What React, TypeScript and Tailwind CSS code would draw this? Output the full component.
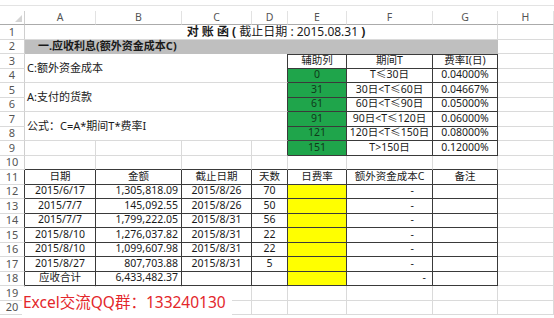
import React from 'react';
import { twMerge } from 'tailwind-merge';

const FONT = { fontFamily: '"Noto Sans", "Noto Sans CJK SC", sans-serif' };

type CellProps = { children?: React.ReactNode; className?: string };

// plain sheet cell with light gridlines
const C = ({ children, className }: CellProps) => (
	<div
		className={twMerge(
			'flex items-center whitespace-nowrap leading-none border-r border-b border-[#dadada] text-[10.5px] text-[#1a1a1a]',
			className
		)}
	>
		{children}
	</div>
);

// cell inside a bordered table
const T = ({ children, className }: CellProps) => (
	<C className={twMerge('justify-center border-[#3a3a3a]', className)}>{children}</C>
);

const RH = ({ n, dark }: { n: number; dark?: boolean }) => (
	<C
		className={twMerge(
			'justify-center text-[11px] text-[#555] border-r-[#cfcfcf]',
			dark ? 'border-r-[#3a3a3a]' : ''
		)}
	>
		{n}
	</C>
);

const rates = [
	['0', 'T≤30日', '0.04000%'],
	['31', '30日<T≤60日', '0.04667%'],
	['61', '60日<T≤90日', '0.05000%'],
	['91', '90日<T≤120日', '0.06000%'],
	['121', '120日<T≤150日', '0.08000%'],
	['151', 'T>150日', '0.12000%'],
];

const items = [
	['2015/6/17', '1,305,818.09', '2015/8/26', '70'],
	['2015/7/7', '145,092.55', '2015/8/26', '50'],
	['2015/7/7', '1,799,222.05', '2015/8/31', '56'],
	['2015/8/10', '1,276,037.82', '2015/8/31', '22'],
	['2015/8/10', '1,099,607.98', '2015/8/31', '22'],
	['2015/8/27', '807,703.88', '2015/8/31', '5'],
];

const notes = ['C:额外资金成本', 'A:支付的货款', '公式：C=A*期间T*费率I'];

export default function App() {
	return (
		<div className="relative w-[554px] h-[318px] overflow-hidden bg-white" style={FONT}>
			<div className="h-[11px] pt-[5px]">
				<div className="border-t border-[#e3e3e3]" />
			</div>

			<div className="grid grid-cols-[25px_71px_86px_70px_36px_59px_86px_65px_1fr] grid-rows-[14px] auto-rows-[14.5px]">
				{/* column letters */}
				<C className="items-end justify-end border-b-[#ababab] border-r-[#cfcfcf] pr-[2px] pb-[2px]">
					<div className="w-0 h-0 border-l-[7px] border-l-transparent border-b-[7px] border-b-[#d4d4d4]" />
				</C>
				{['A', 'B', 'C', 'D', 'E', 'F', 'G', 'H'].map((l) => (
					<C key={l} className="justify-center text-[10.5px] text-[#555] border-b-[#ababab] border-r-[#e2e2e2]">
						{l}
					</C>
				))}

				{/* row 1 */}
				<RH n={1} />
				<C className="col-span-7 justify-center pl-[30px] text-[12px]">
					<span className="font-bold">对&nbsp;账&nbsp;函&nbsp;(&nbsp;</span>
					<span>截止日期&nbsp;:&nbsp;2015.08.31</span>
					<span className="font-bold">&nbsp;)</span>
				</C>
				<C />

				{/* row 2 */}
				<RH n={2} />
				<C className="col-span-7 bg-[#bfbfbf] border-[#bfbfbf] pl-[13px] font-bold text-[11px]">
					一.应收利息(额外资金成本C)
				</C>
				<C />

				{/* rows 3-8 */}
				{[0, 1, 2, 3, 4, 5].map((i) => (
					<React.Fragment key={i}>
						<RH n={3 + i} />
						{i % 2 === 0 && (
							<C className="col-span-4 row-span-2 pl-[2px] text-[11px] border-r-[#3a3a3a]">
								{notes[i / 2]}
							</C>
						)}
						{i === 0 ? (
							<>
								<T className="border-t">辅助列</T>
								<T className="border-t">期间T</T>
								<T className="border-t">费率I(日)</T>
							</>
						) : (
							<>
								<T className="bg-[#1fa54b] text-[#0f3a1a]">{rates[i - 1][0]}</T>
								<T>{rates[i - 1][1]}</T>
								<T>{rates[i - 1][2]}</T>
							</>
						)}
						<C />
					</React.Fragment>
				))}

				{/* row 9 */}
				<RH n={9} />
				<C />
				<C />
				<C />
				<C className="border-r-[#3a3a3a]" />
				<T className="bg-[#1fa54b] text-[#0f3a1a]">{rates[5][0]}</T>
				<T>{rates[5][1]}</T>
				<T>{rates[5][2]}</T>
				<C />

				{/* row 10 */}
				<RH n={10} />
				{[0, 1, 2, 3, 4, 5, 6].map((k) => (
					<C key={k} className="border-b-[#3a3a3a]" />
				))}
				<C />

				{/* row 11 header */}
				<RH n={11} dark />
				{['日期', '金额', '截止日期', '天数', '日费率', '额外资金成本C', '备注'].map((h) => (
					<T key={h}>{h}</T>
				))}
				<C />

				{/* rows 12-17 */}
				{items.map((r, i) => (
					<React.Fragment key={i}>
						<RH n={12 + i} dark />
						<T>{r[0]}</T>
						<T className="justify-end pr-[3px]">{r[1]}</T>
						<T>{r[2]}</T>
						<T>{r[3]}</T>
						<T className="bg-[#ffff00]" />
						<T className="justify-end pr-[18px]">-</T>
						<T />
						<C />
					</React.Fragment>
				))}

				{/* row 18 */}
				<RH n={18} dark />
				<T>应收合计</T>
				<T className="justify-end pr-[3px]">6,433,482.37</T>
				<T />
				<T />
				<T className="bg-[#ffff00]" />
				<T className="justify-end pr-[6px]">-</T>
				<T />
				<C />

				{/* rows 19-20 */}
				{[19, 20].map((n) => (
					<React.Fragment key={n}>
						<RH n={n} />
						{[0, 1, 2, 3, 4, 5, 6, 7].map((k) => (
							<C key={k} />
						))}
					</React.Fragment>
				))}
			</div>

			{/* floating text box */}
			<div className="absolute left-[22px] top-[287px] w-[210px] h-[31px] bg-white flex items-center pl-[1px] text-[15.5px] leading-none text-[#e3262b] whitespace-nowrap">
				Excel交流QQ群：133240130
			</div>
		</div>
	);
}
